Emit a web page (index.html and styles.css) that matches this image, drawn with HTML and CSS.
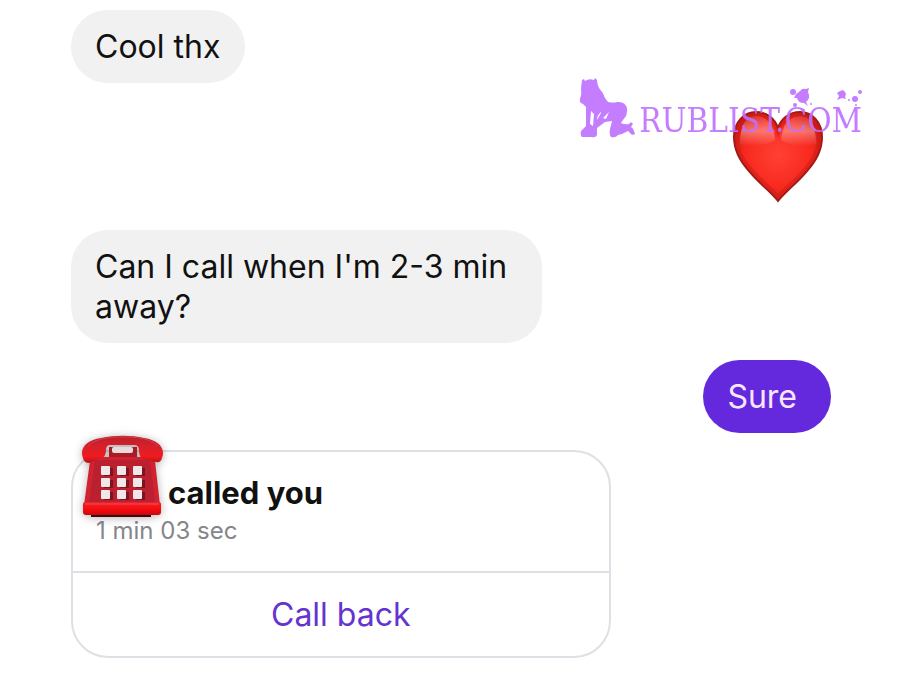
FILE: index.html
```html
<!DOCTYPE html>
<html lang="en">

<head>
    <meta charset="UTF-8">
    <meta name="viewport" content="width=device-width, initial-scale=1.0">
    <title>Chat</title>
    <link rel="stylesheet" href="styles.css">
</head>

<body>
<main class="chat">
    <div class="bubble received">Cool thx</div>

    <div class="reaction">
        <svg class="heart" viewBox="0 0 92 93" role="img" aria-label="Red heart">
            <defs>
                <radialGradient id="heart-fill" cx="50%" cy="48%" r="58%">
                    <stop offset="0" stop-color="#ff4133"/>
                    <stop offset="0.65" stop-color="#f8291f"/>
                    <stop offset="1" stop-color="#c91914"/>
                </radialGradient>
                <linearGradient id="heart-shine" x1="0" y1="0" x2="0" y2="1">
                    <stop offset="0" stop-color="#fff" stop-opacity="0.1"/>
                    <stop offset="0.5" stop-color="#fff" stop-opacity="0.35"/>
                    <stop offset="1" stop-color="#fff" stop-opacity="0"/>
                </linearGradient>
            </defs>
            <path d="M46 91C39 82 27 73 17 61C7 50 2 39 2 27C2 12 12 2 24 2C35 2 43 9 46 18C49 9 57 2 68 2C80 2 90 12 90 27C90 39 85 50 75 61C65 73 53 82 46 91Z" fill="url(#heart-fill)" stroke="#a51a14" stroke-width="2"/>
            <path d="M46 86C39 78 28 70 19 59C10 49 5 39 5 27C5 14 14 5 24 5C35 5 43 13 46 23C49 13 57 5 68 5C78 5 87 14 87 27C87 39 82 49 73 59C64 70 53 78 46 86Z" fill="none" stroke="#c41c16" stroke-width="3" opacity="0.5"/>
            <path d="M8 34C8 14 15 6 24 6C34 6 42 14 43 30C33 36 18 38 8 34Z" fill="url(#heart-shine)"/>
            <path d="M49 30C50 14 58 6 68 6C77 6 84 14 84 34C74 38 59 36 49 30Z" fill="url(#heart-shine)"/>
        </svg>
    </div>

    <div class="bubble received">Can I call when I'm 2-3 min away?</div>
    <div class="bubble sent">Sure</div>

    <section class="call-card">
        <svg class="phone" viewBox="0 0 84 84" role="img" aria-label="Red telephone">
            <defs>
                <linearGradient id="handset" x1="0" y1="0" x2="0" y2="1">
                    <stop offset="0" stop-color="#b91f2b"/>
                    <stop offset="0.4" stop-color="#d8202a"/>
                    <stop offset="0.75" stop-color="#f01c1e"/>
                    <stop offset="1" stop-color="#b5121a"/>
                </linearGradient>
                <linearGradient id="base" x1="0" y1="0" x2="0" y2="1">
                    <stop offset="0" stop-color="#e5252d"/>
                    <stop offset="0.5" stop-color="#fa0c10"/>
                    <stop offset="1" stop-color="#c5080e"/>
                </linearGradient>
            </defs>
            <path d="M10 78H70V82H10Z" fill="#3d090c"/>
            <path d="M28 12H56V28H28Z" fill="#a81c27"/>
            <path d="M9 26Q10 22 15 22H68Q73 22 74 26L79 70H3Z" fill="#d0232f"/>
            <path d="M14 25H69L74 67H8Z" fill="#bb2031"/>
            <rect x="31" y="12" width="21" height="6" rx="2" fill="#eadbdd"/>
            <path d="M2 69Q2 67 5 67H77Q80 67 80 69V77Q80 80 77 80H5Q2 80 2 77Z" fill="url(#base)"/>
            <path d="M4 69H78" stroke="#ee5358"/>
            <path d="M2 23C-2 13 6 5 20 3C34 0 50 0 63 3C77 5 85 13 81 23Q80 28 75 27L62 24Q58 22 58 15Q58 10 53 10H29Q25 10 25 15Q25 22 20 23L8 28Q3 28 2 23Z" fill="url(#handset)"/>
            <path d="M7 11C15 3 29 2 42 2S69 3 77 11" fill="none" stroke="#d0404a" stroke-width="1"/>
            <g fill="#7b1420">
                <rect x="23" y="33" width="9" height="8"/>
                <rect x="39" y="33" width="9" height="8"/>
                <rect x="55" y="33" width="9" height="8"/>
                <rect x="23" y="45" width="9" height="8"/>
                <rect x="39" y="45" width="9" height="8"/>
                <rect x="55" y="45" width="9" height="8"/>
                <rect x="23" y="57" width="9" height="8"/>
                <rect x="39" y="57" width="9" height="8"/>
                <rect x="55" y="57" width="9" height="8"/>
            </g>
            <g fill="#eee8e9">
                <rect x="20" y="31" width="9" height="9" rx="1"/>
                <rect x="36" y="31" width="9" height="9" rx="1"/>
                <rect x="52" y="31" width="9" height="9" rx="1"/>
                <rect x="20" y="43" width="9" height="9" rx="1"/>
                <rect x="36" y="43" width="9" height="9" rx="1"/>
                <rect x="52" y="43" width="9" height="9" rx="1"/>
                <rect x="20" y="55" width="9" height="9" rx="1"/>
                <rect x="36" y="55" width="9" height="9" rx="1"/>
                <rect x="52" y="55" width="9" height="9" rx="1"/>
            </g>
        </svg>
        <div class="call-info">
            <h2 class="call-title">called you</h2>
            <p class="call-time">1 min 03 sec</p>
        </div>
        <button type="button" class="call-back">Call back</button>
    </section>
</main>

<div class="watermark">
    <svg class="figure" viewBox="0 0 56 60" aria-hidden="true">
        <path d="M3 2L5 1L6 3Q10 0 15 2L16 0L18 2Q18 6 20 10Q24 14 26 20L29 24Q35 25 38 24Q46 23 48 30Q49 37 44 42L42 45Q46 47 50 46L52 44L54 46L52 49Q54 50 55 53L56 56L53 57L49 53Q44 56 39 57Q37 60 32 59Q30 57 31 51L33 43L26 44L18 50V57Q17 60 12 59H3Q1 57 2 53L7 48V29L4 26Q0 25 1 21Q3 16 2 10ZM12 33L11 46L14 48L15 36ZM22 34Q18 37 18 42L22 35ZM30 34L24 40L27 41Z" fill-rule="evenodd"/>
    </svg>
    <span class="watermark-text">RUBLIST.COM</span>
    <svg class="splash" viewBox="0 0 76 26" aria-hidden="true">
        <circle cx="7" cy="6" r="3"/>
        <path d="M10 8L14 5Q16 2 20 3L23 2L22 6Q25 12 20 16L22 20L18 17Q12 17 11 12L8 12Z"/>
        <circle cx="9" cy="19" r="2"/>
        <circle cx="25" cy="18" r="1"/>
        <path d="M51 7L54 5L57 4L59 6L60 8L59 11L60 13L56 12L51 14L53 10Z"/>
        <circle cx="69" cy="13" r="3"/>
        <circle cx="63" cy="14" r="1"/>
        <circle cx="74" cy="6" r="2"/>
        <circle cx="70" cy="19" r="1"/>
    </svg>
</div>
</body>

</html>
```
FILE: styles.css
```css
* {
    box-sizing: border-box;
}

body {
    position: relative;
    margin: 0;
    background-color: #fff;
    color: #111;
    font-family: Inter, "Liberation Sans", sans-serif;
}

.chat {
    display: flex;
    flex-direction: column;
    align-items: flex-start;
    gap: 17px;
    padding: 10px 71px 18px;
}

.bubble {
    max-width: 62%;
    padding: 17px 25px 16px 24px;
    border-radius: 37px;
    font-size: 32px;
    line-height: 40px;
}

.received {
    background-color: #f1f1f1;
}

.sent {
    align-self: flex-end;
    padding-right: 34px;
    background-color: #6429dc;
    color: #f8e6ff;
}

.reaction {
    align-self: flex-end;
    padding: 10px 7px;
}

.heart {
    display: block;
    width: 92px;
    height: 93px;
}

.call-card {
    position: relative;
    width: 71%;
    border: 2px solid #dfdfe5;
    border-radius: 37px;
}

.phone {
    position: absolute;
    top: -17px;
    left: 8px;
    width: 84px;
    height: 84px;
    filter: drop-shadow(0 1px 4px rgba(0, 0, 0, 0.3));
}

.call-info {
    padding: 20px 23px 23px;
}

.call-title {
    margin: 0;
    padding-left: 72px;
    font-size: 31px;
    font-weight: 700;
    line-height: 42px;
}

.call-time {
    margin: 0;
    color: #85858a;
    font-size: 24px;
    line-height: 34px;
}

.call-back {
    display: block;
    width: 100%;
    padding: 22px 24px 21px;
    border: none;
    border-top: 2px solid #dfdfe5;
    background: none;
    color: #6533ce;
    font-family: inherit;
    font-size: 32px;
    line-height: 40px;
    cursor: pointer;
}

/* site mark over the conversation */
.watermark {
    position: absolute;
    top: 78px;
    right: 40px;
    display: flex;
    align-items: flex-end;
    gap: 4px;
    color: #bf70ff;
    opacity: 0.9;
}

.watermark svg {
    fill: currentColor;
}

.figure {
    width: 56px;
    height: 60px;
}

.watermark-text {
    font-family: "DejaVu Serif Condensed", "DejaVu Serif", serif;
    font-size: 33px;
    line-height: 34px;
}

.splash {
    position: absolute;
    top: 8px;
    right: 0;
    width: 76px;
    height: 26px;
}
```
